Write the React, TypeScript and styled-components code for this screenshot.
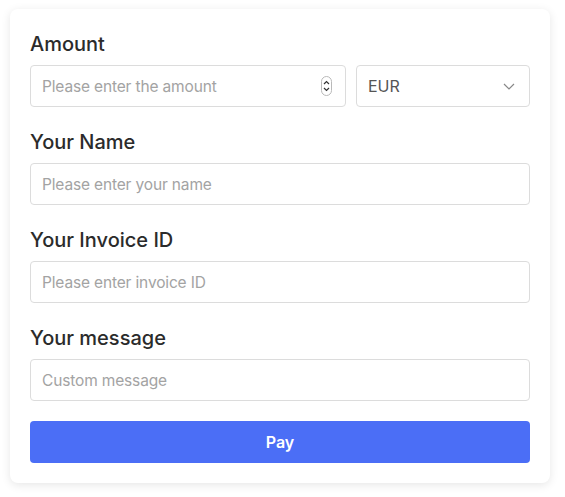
import React, { useState } from "react";
import styled, { createGlobalStyle } from "styled-components";

const GlobalStyle = createGlobalStyle`
    html, body {
        margin: 0;
        padding: 0;
        background: #ffffff;
    }

    body {
        font-family: Inter, "Liberation Sans", sans-serif;
        -webkit-font-smoothing: antialiased;
    }
`;

export default function App() {
    const [amount, setAmount] = useState("");
    const [currency, setCurrency] = useState("EUR");
    const [name, setName] = useState("");
    const [invoiceId, setInvoiceId] = useState("");
    const [message, setMessage] = useState("");

    return (
        <Page>
            <GlobalStyle />
            <Card onSubmit={(e) => e.preventDefault()}>
                <Label htmlFor="amount">Amount</Label>
                <AmountRow>
                    <NumberWrap>
                        <Input
                            id="amount"
                            type="text"
                            inputMode="decimal"
                            placeholder="Please enter the amount"
                            value={amount}
                            onChange={(e) => setAmount(e.target.value)}
                        />
                        <Stepper viewBox="0 0 11 20" aria-hidden>
                            <rect
                                x="0.5"
                                y="0.5"
                                width="10"
                                height="19"
                                rx="5"
                                fill="#fff"
                                stroke="#b9b9b9"
                            />
                            <path
                                d="M3 8 L5.5 5.5 L8 8"
                                fill="none"
                                stroke="#333"
                                strokeWidth="1.2"
                            />
                            <path
                                d="M3 12 L5.5 14.5 L8 12"
                                fill="none"
                                stroke="#333"
                                strokeWidth="1.2"
                            />
                        </Stepper>
                    </NumberWrap>
                    <SelectWrap>
                        <Select
                            value={currency}
                            onChange={(e) => setCurrency(e.target.value)}
                        >
                            <option>EUR</option>
                            <option>USD</option>
                            <option>GBP</option>
                        </Select>
                        <Chevron viewBox="0 0 12 7" aria-hidden>
                            <path
                                d="M1 1 L6 6 L11 1"
                                fill="none"
                                stroke="#888"
                                strokeWidth="1.2"
                            />
                        </Chevron>
                    </SelectWrap>
                </AmountRow>

                <Label htmlFor="name" $spaced>
                    Your Name
                </Label>
                <Input
                    id="name"
                    type="text"
                    placeholder="Please enter your name"
                    value={name}
                    onChange={(e) => setName(e.target.value)}
                />

                <Label htmlFor="invoice" $spaced>
                    Your Invoice ID
                </Label>
                <Input
                    id="invoice"
                    type="text"
                    placeholder="Please enter invoice ID"
                    value={invoiceId}
                    onChange={(e) => setInvoiceId(e.target.value)}
                />

                <Label htmlFor="message" $spaced>
                    Your message
                </Label>
                <Input
                    id="message"
                    type="text"
                    placeholder="Custom message"
                    value={message}
                    onChange={(e) => setMessage(e.target.value)}
                />

                <PayButton type="submit">Pay</PayButton>
            </Card>
        </Page>
    );
}

const Page = styled.div`
    padding: 9px 15px 14px 10px;
`;

const Card = styled.form`
    display: flex;
    flex-direction: column;
    width: 540px;
    box-sizing: border-box;
    padding: 20px;
    background: #ffffff;
    border-radius: 8px;
    box-shadow: 0 2px 10px rgba(0, 0, 0, 0.1);
`;

const Label = styled.label<{ $spaced?: boolean }>`
    display: block;
    margin: ${(p) => (p.$spaced ? "21px" : "1px")} 0 7px;
    font-size: 20px;
    line-height: 28px;
    font-weight: 500;
    color: #2b2b2b;
`;

const AmountRow = styled.div`
    display: flex;
    gap: 10px;
`;

const NumberWrap = styled.div`
    position: relative;
    flex: 1;
`;

const SelectWrap = styled.div`
    position: relative;
    width: 174px;
`;

const Input = styled.input`
    display: block;
    width: 100%;
    box-sizing: border-box;
    height: 42px;
    padding: 0 11px;
    font-family: inherit;
    font-size: 15.5px;
    letter-spacing: -0.15px;
    color: #333;
    background: #fff;
    border: 1px solid #dcdcdc;
    border-radius: 4px;
    outline: none;

    &::placeholder {
        color: #a3a3a3;
    }
`;

const Stepper = styled.svg`
    position: absolute;
    right: 14px;
    top: 11px;
    width: 11px;
    height: 20px;
    pointer-events: none;
`;

const Select = styled.select`
    display: block;
    width: 100%;
    height: 42px;
    box-sizing: border-box;
    padding: 0 11px;
    font-family: inherit;
    font-size: 16px;
    color: #555;
    background: #fff;
    border: 1px solid #dcdcdc;
    border-radius: 4px;
    outline: none;
    appearance: none;
    -webkit-appearance: none;
`;

const Chevron = styled.svg`
    position: absolute;
    right: 15px;
    top: 18px;
    width: 12px;
    height: 7px;
    pointer-events: none;
`;

const PayButton = styled.button`
    margin-top: 20px;
    height: 42px;
    border: none;
    border-radius: 4px;
    background: #4b6ef6;
    color: #ffffff;
    font-family: inherit;
    font-size: 16px;
    font-weight: 600;
    cursor: pointer;
`;
